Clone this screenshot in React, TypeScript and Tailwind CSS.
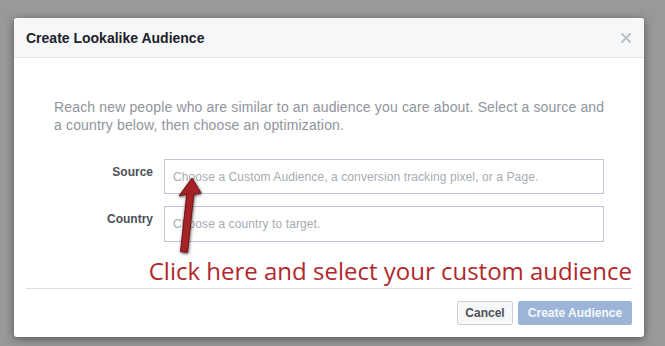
import React from "react";

export default function App() {
  return (
    <div
      className="relative w-[665px] h-[346px] bg-[#999999] overflow-hidden pl-[14px] pt-[18px]"
      style={{ fontFamily: '"Liberation Sans", Arial, sans-serif' }}
    >
      <div className="w-[630px] h-[319px] bg-white rounded-[3px] shadow-[0_2px_10px_rgba(0,0,0,0.45)] flex flex-col overflow-hidden">
        <div className="h-[40px] bg-[#f6f7f9] border-b border-[#e5e5e5] flex items-center justify-between pl-[12px] pr-[13px] shrink-0">
          <span className="text-[14px] font-bold text-[#1d2129] leading-none">Create Lookalike Audience</span>
          <svg width="10" height="10" viewBox="0 0 10 10">
            <path d="M1 1 L9 9 M9 1 L1 9" stroke="#bec2c9" strokeWidth="2.2" strokeLinecap="square" />
          </svg>
        </div>
        <div className="flex flex-col px-[12px]">
          <p className="pt-[40px] pl-[28px] pr-[18px] text-[14px] leading-[18px] tracking-[0.15px] text-[#90949c]">
            Reach new people who are similar to an audience you care about. Select a source and a country below, then choose an optimization.
          </p>
          <div className="mt-[25px] flex items-start">
            <div className="w-[127px] text-right text-[12px] font-bold text-[#4b4f56] pt-[4px]">Source</div>
            <div className="ml-[11px] w-[440px] h-[35px] border border-[#bdc7d8] flex items-center pl-[8px] text-[12px] tracking-[0.1px] text-[#a7abb1]">
              Choose a Custom Audience, a conversion tracking pixel, or a Page.
            </div>
          </div>
          <div className="mt-[12px] flex items-start">
            <div className="w-[127px] text-right text-[12px] font-bold text-[#4b4f56] pt-[4px]">Country</div>
            <div className="ml-[11px] w-[440px] h-[36px] border border-[#bdc7d8] flex items-center pl-[8px] text-[12px] tracking-[0.1px] text-[#a7abb1]">
              Choose a country to target.
            </div>
          </div>
          <div
            className="mt-[15px] text-right text-[24px] leading-[28px] text-[#b0282b]"
            style={{ fontFamily: '"Open Sans", "Noto Sans", sans-serif' }}
          >
            Click here and select your custom audience
          </div>
          <div className="mt-[3px] border-t border-[#dddfe2]" />
          <div className="mt-[12px] flex justify-end gap-[5px]">
            <button className="h-[24px] w-[56px] bg-[#f6f7f9] border border-[#ced0d4] rounded-[2px] text-[12px] font-bold text-[#4b4f56]">
              Cancel
            </button>
            <button className="h-[24px] w-[114px] bg-[#9cb4d8] border border-[#9cb4d8] rounded-[2px] text-[12px] font-bold text-white/90">
              Create Audience
            </button>
          </div>
        </div>
      </div>
      <svg className="absolute left-[170px] top-[172px]" width="40" height="86" viewBox="0 0 40 86">
        <defs>
          <filter id="sh" x="-50%" y="-20%" width="200%" height="140%">
            <feDropShadow dx="0.5" dy="1" stdDeviation="1.4" floodColor="#000" floodOpacity="0.7" />
          </filter>
        </defs>
        <path
          d="M10.5 79.6 L16.8 22 L9 24 L22 6 L31 21 L23.8 22.4 L17.5 80.4 Z"
          fill="#a52326"
          stroke="#6e1416"
          strokeWidth="1"
          strokeLinejoin="round"
          filter="url(#sh)"
        />
      </svg>
    </div>
  );
}
